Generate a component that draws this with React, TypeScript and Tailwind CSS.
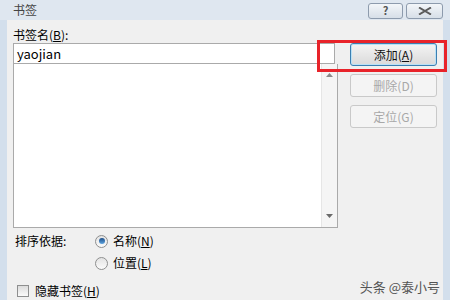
import React from "react";

const cjk = { fontFamily: '"Noto Sans CJK SC", "Liberation Sans", sans-serif' };

// dialog push button, default one has blue focus border
const Btn = ({ label, hot, enabled }: { label: string; hot: string; enabled?: boolean }) => (
  <div
    className={`w-[87px] h-[23px] flex items-center justify-center rounded-[3px] text-[12px] ${
      enabled
        ? "border border-[#3c7fb1] bg-gradient-to-b from-[#f4f4f4] to-[#dadada] text-[#111] shadow-[inset_0_0_0_1px_#b9e1f6]"
        : "border border-[#c9c9c9] bg-[#f4f4f4] text-[#a8a8a8]"
    }`}
  >
    {label}(<span className={enabled ? "underline" : ""}>{hot}</span>)
  </div>
);

const Radio = ({ on }: { on?: boolean }) => (
  <div className="w-[13px] h-[13px] rounded-full border border-[#8e8f8f] bg-gradient-to-b from-[#e3e3e3] to-[#fbfbfb] flex items-center justify-center">
    {on && <div className="w-[6px] h-[6px] rounded-full bg-gradient-to-b from-[#1d4e89] to-[#5fa5e0]" />}
  </div>
);

export default function App() {
  return (
    <div className="relative w-[450px] h-[300px] overflow-hidden bg-[#d3dfec] flex flex-col" style={cjk}>
      {/* title bar */}
      <div className="h-[22px] flex items-center bg-[#dfe7f0] pl-[13px] pr-[7px]">
        <span className="text-[12px] text-[#444] flex-1">书签</span>
        <div className="flex gap-[3px] mt-[1px]">
          <div className="w-[35px] h-[16px] border border-[#8d9bad] rounded-[3px] bg-gradient-to-b from-[#f3f6f9] to-[#d7dfe8] flex items-center justify-center text-[11px] font-bold text-[#555]">
            ?
          </div>
          <div className="w-[37px] h-[16px] border border-[#8d9bad] rounded-[3px] bg-gradient-to-b from-[#f3f6f9] to-[#d7dfe8] flex items-center justify-center">
            <svg width="14" height="8" viewBox="0 0 14 8">
              <path d="M1 0.5 L13 7.5 M13 0.5 L1 7.5" stroke="#5b5b5b" strokeWidth="2" fill="none" />
            </svg>
          </div>
        </div>
      </div>

      {/* body */}
      <div className="flex-1 mx-[7px] bg-[#f0f0f0] pl-[6px] pt-[7px] flex flex-col">
        <div className="text-[12px] h-[16px] leading-[16px] text-black">
          书签名(<span className="underline">B</span>):
        </div>
        <div className="flex">
          <div className="w-[325px] h-[185px] flex flex-col">
            <div className="h-[21px] border border-[#aaaaaa] bg-white flex items-center pl-[3px] text-[13px] text-black w-[322px]">
              yaojian
            </div>
            <div className="flex-1 border border-[#aaaaaa] border-t-0 bg-white flex">
              <div className="flex-1" />
              <div className="w-[16px] bg-[#f5f5f5] border-l border-[#e6e6e6] flex flex-col items-center justify-between py-[9px]">
                <svg width="7" height="4" viewBox="0 0 7 4">
                  <path d="M0 4 L3.5 0 L7 4 Z" fill="#8a8a8a" />
                </svg>
                <svg width="7" height="4" viewBox="0 0 7 4">
                  <path d="M0 0 L3.5 4 L7 0 Z" fill="#6a6a6a" />
                </svg>
              </div>
            </div>
          </div>
          <div className="ml-[12px] flex flex-col gap-[8px]">
            <Btn label="添加" hot="A" enabled />
            <Btn label="删除" hot="D" />
            <Btn label="定位" hot="G" />
          </div>
        </div>

        <div className="flex mt-[2px] ml-[2px] text-[12px] text-black">
          <span className="w-[80px] h-[22px] leading-[22px]">排序依据:</span>
          <div className="flex flex-col">
            <div className="flex items-center gap-[5px] h-[22px]">
              <Radio on />
              <span>
                名称(<span className="underline">N</span>)
              </span>
            </div>
            <div className="flex items-center gap-[5px] h-[22px]">
              <Radio />
              <span>
                位置(<span className="underline">L</span>)
              </span>
            </div>
          </div>
        </div>

        <div className="flex items-center mt-[8px] ml-[4px] text-[12px] text-black">
          <div className="w-[12px] h-[12px] border border-[#8e8f8f] bg-gradient-to-b from-[#dcdcdc] to-[#fafafa]" />
          <span className="ml-[6px]">
            隐藏书签(<span className="underline">H</span>)
          </span>
          <span className="ml-auto mr-[3px] -mt-[8px] text-[13px] text-[#555]">头条 @泰小号</span>
        </div>
      </div>

      {/* red highlight box */}
      <div className="absolute left-[317px] top-[40px] w-[130px] h-[32px] border-[3px] border-[#e8232a]" />
    </div>
  );
}
